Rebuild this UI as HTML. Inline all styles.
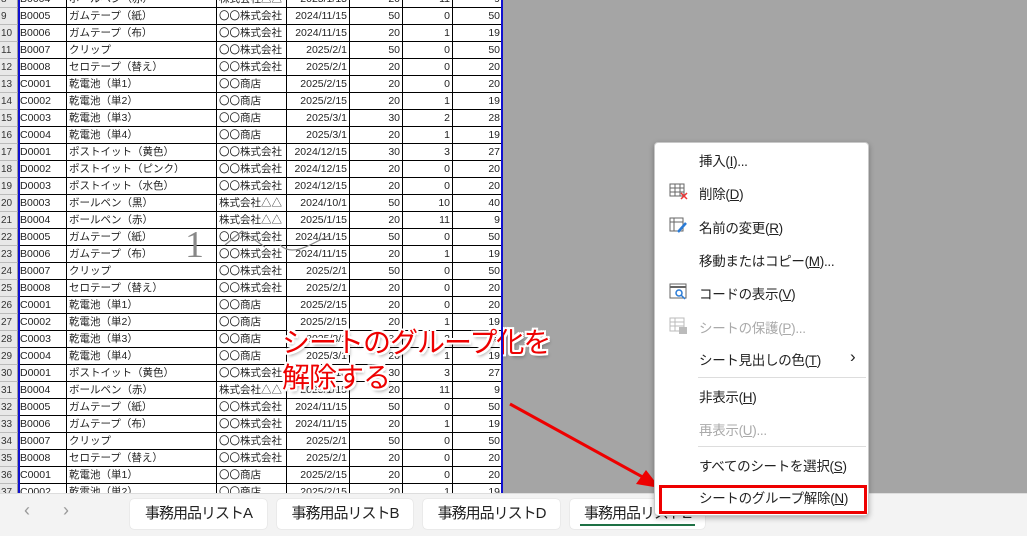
<!DOCTYPE html>
<html><head><meta charset="utf-8"><style>
*{margin:0;padding:0;box-sizing:border-box}
body{width:1027px;height:536px;overflow:hidden;background:#a5a5a5;position:relative;font-family:"Liberation Sans","Noto Sans CJK JP",sans-serif}
#sheet{position:absolute;left:0;top:0;width:503px;height:493px;background:#fff;overflow:hidden}
.r{position:absolute;left:0;height:17px;width:503px;font-size:10.5px;color:#222}
.r div{position:absolute;top:0;height:17px;line-height:17px;border-right:1px solid #000;border-bottom:1px solid #000;padding:0 2px;white-space:nowrap;overflow:hidden}
.h{left:0;width:18px;background:#e8e8e8;border-right:1px solid #999!important;border-bottom:1px solid #bbb!important;color:#333;font-size:10px;padding:0 1px!important}
.n{text-align:right}
#menu{position:absolute;left:654px;top:142px;width:215px;height:374px;background:#fff;border:1px solid #c8c8c8;border-radius:4px;box-shadow:0 2px 6px rgba(0,0,0,.3);font-size:13.5px;color:#222;z-index:10}
.mi{position:absolute;left:44px;white-space:nowrap;letter-spacing:-0.3px}
.dis{color:#aaa}
.sep{position:absolute;left:43px;right:2px;height:1px;background:#ddd}
#tabs{position:absolute;left:0;top:493px;width:1027px;height:43px;background:#f3f3f3;border-top:1px solid #ddd}
.tab{position:absolute;top:5px;height:30px;background:#fff;border-radius:4px;font-size:15px;line-height:30px;text-align:center;color:#222;box-shadow:0 0 1px #bbb;letter-spacing:-1px}
.ann{position:absolute;font-size:28px;color:#e00;text-shadow:-2px -2px 0 #fff,2px -2px 0 #fff,-2px 2px 0 #fff,2px 2px 0 #fff,0 2px 0 #fff,0 -2px 0 #fff,2px 0 0 #fff,-2px 0 0 #fff,2px 3px 3px rgba(0,0,0,.4);white-space:nowrap;letter-spacing:-1px}
u{text-decoration:underline}
</style></head><body>
<div id="sheet">
<div style="position:absolute;left:18px;top:0;width:2px;height:493px;background:#1010d0;z-index:2"></div>
<div style="position:absolute;left:501px;top:0;width:2px;height:493px;background:#1010d0;z-index:2"></div>
<div id="rows"></div>
<div style="position:absolute;left:185px;top:223px;font-size:38px;color:#888;font-family:'Liberation Serif',serif;font-weight:300;z-index:3">1</div>
<svg style="position:absolute;left:220px;top:225px;z-index:3" width="120" height="30"><path d="M5 20 L22 6 L45 22 M60 20 Q70 30 90 20 L110 10" stroke="#888" stroke-width="1.2" fill="none"/></svg>
</div>
<script>
const d=[
["8","B0004","ボールペン（赤）","株式会社△△","2025/1/15","20","11","9"],
["9","B0005","ガムテープ（紙）","〇〇株式会社","2024/11/15","50","0","50"],
["10","B0006","ガムテープ（布）","〇〇株式会社","2024/11/15","20","1","19"],
["11","B0007","クリップ","〇〇株式会社","2025/2/1","50","0","50"],
["12","B0008","セロテープ（替え）","〇〇株式会社","2025/2/1","20","0","20"],
["13","C0001","乾電池（単1）","〇〇商店","2025/2/15","20","0","20"],
["14","C0002","乾電池（単2）","〇〇商店","2025/2/15","20","1","19"],
["15","C0003","乾電池（単3）","〇〇商店","2025/3/1","30","2","28"],
["16","C0004","乾電池（単4）","〇〇商店","2025/3/1","20","1","19"],
["17","D0001","ポストイット（黄色）","〇〇株式会社","2024/12/15","30","3","27"],
["18","D0002","ポストイット（ピンク）","〇〇株式会社","2024/12/15","20","0","20"],
["19","D0003","ポストイット（水色）","〇〇株式会社","2024/12/15","20","0","20"],
["20","B0003","ボールペン（黒）","株式会社△△","2024/10/1","50","10","40"],
["21","B0004","ボールペン（赤）","株式会社△△","2025/1/15","20","11","9"]];
const rep=d.slice(1,9);
rep.forEach((r,i)=>{d.push([String(22+i)].concat(r.slice(1)))});
d.push(["30","D0001","ポストイット（黄色）","〇〇株式会社","2024/12/15","30","3","27"]);
d.push(["31","B0004","ボールペン（赤）","株式会社△△","2025/1/15","20","11","9"]);
d.slice(1,7).forEach((r,i)=>{d.push([String(32+i)].concat(r.slice(1)))});
const cols=[[0,18],[18,49],[67,150],[217,70],[287,63],[350,53],[403,50],[453,50]];
let h="";
d.forEach((r,i)=>{h+=`<div class="r" style="top:${-9+i*17}px">`;
r.forEach((c,j)=>{h+=`<div class="${j==0?'h':''} ${j>=4?'n':''}" style="left:${cols[j][0]}px;width:${cols[j][1]}px">${c}</div>`});h+="</div>"});
document.getElementById("rows").innerHTML=h;
</script>
<div class="ann" style="left:282px;top:321px">シートのグループ化を</div>
<div class="ann" style="left:282px;top:356px">解除する</div>
<svg style="position:absolute;left:0;top:0" width="1027" height="536"><line x1="510" y1="404" x2="648" y2="480" stroke="#e00" stroke-width="3"/><polygon points="660,488 636,484 646,470" fill="#e00"/></svg>
<div id="tabs">
<div style="position:absolute;left:24px;top:6px;font-size:18px;color:#999">‹</div>
<div style="position:absolute;left:63px;top:6px;font-size:18px;color:#999">›</div>
<div class="tab" style="left:130px;width:137px">事務用品リストA</div>
<div class="tab" style="left:277px;width:136px">事務用品リストB</div>
<div class="tab" style="left:423px;width:137px">事務用品リストD</div>
<div class="tab" style="left:570px;width:135px">事務用品リストE<div style="position:absolute;left:10px;right:10px;bottom:3px;height:2px;background:#1e7145"></div></div>
</div>
<div id="menu">
<div class="mi" style="top:7px">挿入(<u>I</u>)...</div>
<svg style="position:absolute;left:14px;top:40px" width="20" height="18"><rect x="1" y="1" width="14" height="12" fill="none" stroke="#666"/><path d="M1 5H15M1 9H15M6 1V13M11 1V13" stroke="#666"/><path d="M12 10L18 16M18 10L12 16" stroke="#e33" stroke-width="1.5"/></svg>
<div class="mi" style="top:40px">削除(<u>D</u>)</div>
<svg style="position:absolute;left:14px;top:74px" width="20" height="18"><rect x="1" y="1" width="13" height="13" fill="none" stroke="#666"/><path d="M1 5H14M5 1V14" stroke="#666"/><path d="M9 15L17 6" stroke="#2a7bd6" stroke-width="2.5"/></svg>
<div class="mi" style="top:74px">名前の変更(<u>R</u>)</div>
<div class="mi" style="top:107px">移動またはコピー(<u>M</u>)...</div>
<svg style="position:absolute;left:14px;top:140px" width="20" height="18"><rect x="1" y="1" width="16" height="14" fill="none" stroke="#666"/><path d="M1 4H17" stroke="#666" stroke-width="2"/><circle cx="10" cy="10" r="3" fill="none" stroke="#2a7bd6" stroke-width="1.5"/><path d="M12 12L16 16" stroke="#2a7bd6" stroke-width="1.5"/></svg>
<div class="mi" style="top:140px">コードの表示(<u>V</u>)</div>
<svg style="position:absolute;left:14px;top:174px" width="20" height="18"><rect x="1" y="1" width="14" height="13" fill="none" stroke="#bbb"/><path d="M1 5H15M1 9H15M6 1V14" stroke="#bbb"/><rect x="10" y="10" width="8" height="7" fill="#bbb"/></svg>
<div class="mi dis" style="top:174px">シートの保護(<u>P</u>)...</div>
<div class="mi" style="top:206px">シート見出しの色(<u>T</u>)</div>
<div style="position:absolute;left:195px;top:204px;font-size:17px">›</div>
<div class="sep" style="top:234px"></div>
<div class="mi" style="top:243px">非表示(<u>H</u>)</div>
<div class="mi dis" style="top:276px">再表示(<u>U</u>)...</div>
<div class="sep" style="top:303px"></div>
<div class="mi" style="top:312px">すべてのシートを選択(<u>S</u>)</div>
<div class="mi" style="top:344px">シートのグループ解除(<u>N</u>)</div>
</div>
<div style="position:absolute;left:659px;top:485px;width:208px;height:29px;border:3px solid #e00;z-index:11"></div>
</body></html>
